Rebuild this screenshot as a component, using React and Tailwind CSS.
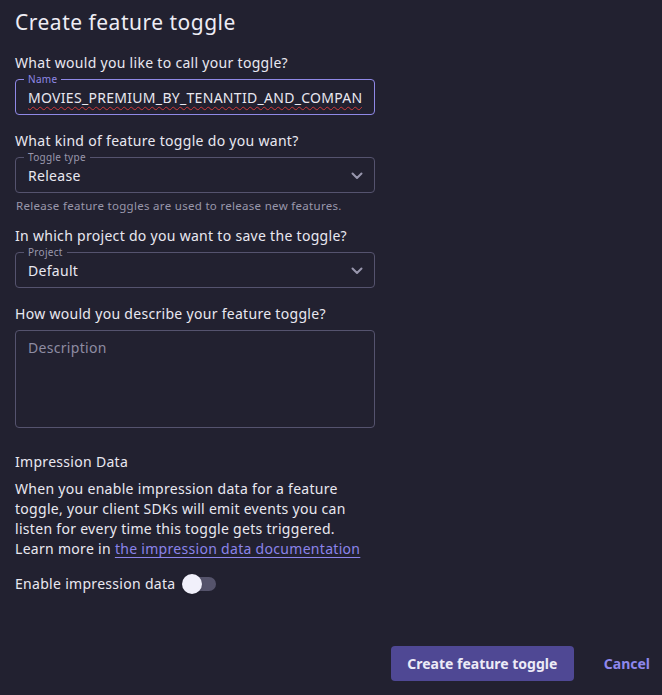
import React from "react";

function Chevron() {
  return (
    <svg width="12" height="8" viewBox="0 0 12 8" fill="none">
      <path d="M1.5 1.5 L6 6 L10.5 1.5" stroke="#9896ad" strokeWidth="2" strokeLinecap="round" strokeLinejoin="round" />
    </svg>
  );
}

function Fieldset({ label, children, focused, className = "" }) {
  return (
    <div className={`relative ${className}`}>
      <fieldset
        className={`absolute inset-x-0 bottom-0 top-[-6px] rounded-[4px] border px-[8px] ${focused ? "border-[#8f88e6]" : "border-[#55536e]"}`}
      >
        {label && (
          <legend className={`px-[4px] text-[10px] leading-[11px] ${focused ? "text-[#8f88e6]" : "text-[#9a98ad]"}`}>
            {label}
          </legend>
        )}
      </fieldset>
      {children}
    </div>
  );
}

export default function App() {
  return (
    <div
      className="min-h-[695px] w-[662px] bg-[#222130] px-[15px] tracking-[0.3px] text-[#e9e8f0]"
      style={{ fontFamily: '"Noto Sans", sans-serif' }}
    >
      <h1 className="pt-[8px] text-[21px] leading-[28px] font-normal tracking-[0.5px] text-[#eeedf5]">Create feature toggle</h1>

      <p className="mt-[17px] text-[14px] leading-[20px]">What would you like to call your toggle?</p>
      <Fieldset label="Name" focused className="mt-[7px] h-[35px] w-[360px]">
        <div className="relative mx-[13px] flex h-full items-center overflow-hidden whitespace-nowrap text-[14px] leading-[18px]">
          <span className="underline decoration-wavy decoration-[#d03a3a] decoration-1 underline-offset-[3px]">
            MOVIES_PREMIUM_BY_TENANTID_AND_COMPANY
          </span>
        </div>
      </Fieldset>

      <p className="mt-[16px] text-[14px] leading-[20px]">What kind of feature toggle do you want?</p>
      <Fieldset label="Toggle type" className="mt-[7px] h-[35px] w-[360px]">
        <div className="relative flex h-full items-center justify-between pl-[13px] pr-[12px] text-[14px] leading-[18px]">
          <span>Release</span>
          <Chevron />
        </div>
      </Fieldset>
      <p className="mt-[5px] ml-[1px] text-[11.5px] leading-[16px] text-[#9997ab]">
        Release feature toggles are used to release new features.
      </p>

      <p className="mt-[12px] text-[14px] leading-[20px]">In which project do you want to save the toggle?</p>
      <Fieldset label="Project" className="mt-[7px] h-[35px] w-[360px]">
        <div className="relative flex h-full items-center justify-between pl-[13px] pr-[12px] text-[14px] leading-[18px]">
          <span>Default</span>
          <Chevron />
        </div>
      </Fieldset>

      <p className="mt-[16px] text-[14px] leading-[20px]">How would you describe your feature toggle?</p>
      <div className="mt-[6px] h-[98px] w-[360px] rounded-[4px] border border-[#55536e] px-[12px] pt-[6px] text-[14px] text-[#8e8ca2]">
        Description
      </div>

      <p className="mt-[24px] text-[14px] leading-[20px]">Impression Data</p>
      <p className="mt-[7px] w-[360px] text-[14px] leading-[20px]">
        When you enable impression data for a feature
        <br />
        toggle, your client SDKs will emit events you can
        <br />
        listen for every time this toggle gets triggered.
        <br />
        Learn more in{" "}
        <a className="text-[#8b84ea] underline underline-offset-[3px]" href="#">
          the impression data documentation
        </a>
      </p>

      <div className="mt-[15px] flex items-center">
        <span className="text-[14px] leading-[20px]">Enable impression data</span>
        <div className="relative ml-[10px] h-[14px] w-[30px] rounded-full bg-[#55536b]">
          <div className="absolute left-[-4px] top-[-3px] h-[20px] w-[20px] rounded-full bg-[#f1f0fb] shadow" />
        </div>
      </div>

      <div className="mt-[52px] flex items-center justify-end tracking-normal">
        <button className="h-[35px] w-[183px] rounded-[4px] bg-[#4f4894] text-[14px] font-bold text-[#ecebf7]">
          Create feature toggle
        </button>
        <button className="ml-[30px] mr-[-3px] text-[14px] font-bold text-[#8e87ec]">Cancel</button>
      </div>
    </div>
  );
}
